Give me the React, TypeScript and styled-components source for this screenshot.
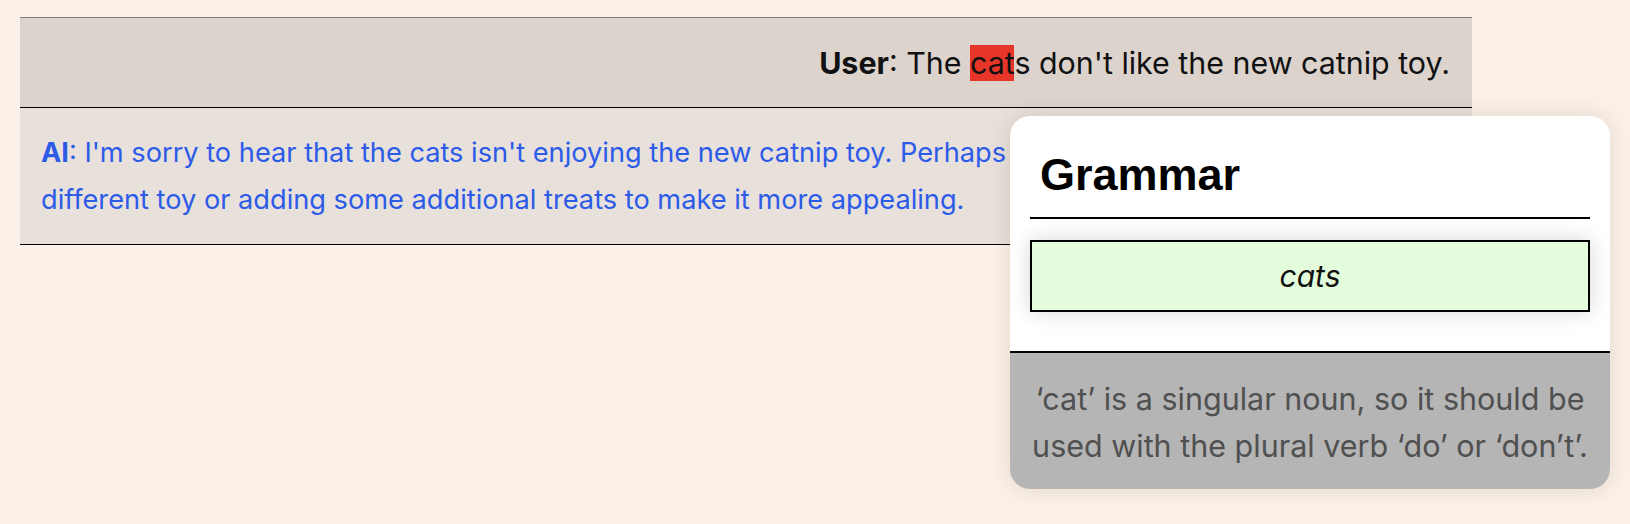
import React from "react";
import styled, { createGlobalStyle } from "styled-components";

const GlobalStyle = createGlobalStyle`
  html, body {
    margin: 0;
    padding: 0;
    background: #fbf1e8;
  }
  body {
    font-family: Inter, "Noto Sans", sans-serif;
  }
`;

const Page = styled.div`
  position: relative;
  width: 1630px;
  height: 524px;
  padding: 17px 0 0 20px;
  box-sizing: border-box;
`;

const Thread = styled.div`
  width: 1452px;
  border-top: 1px solid #7d7d7d;
  display: flex;
  flex-direction: column;
`;

const Message = styled.div<{ $from: "user" | "ai" }>`
  border-bottom: 1px solid #000;
  background: ${(p) => (p.$from === "user" ? "#dcd3cd" : "#e8e0db")};
  text-align: ${(p) => (p.$from === "user" ? "right" : "left")};
  color: ${(p) => (p.$from === "user" ? "#111" : "#2c5be8")};
  font-size: ${(p) => (p.$from === "user" ? "30.4px" : "27.2px")};
  line-height: ${(p) => (p.$from === "user" ? "48px" : "47px")};
  padding: ${(p) => (p.$from === "user" ? "21px 22px 20px 20px" : "21px 20px 21px 21px")};
  white-space: nowrap;
  overflow: hidden;
`;

const Speaker = styled.b`
  font-weight: 700;
`;

const Flag = styled.span`
  background: #e8352a;
`;

const Popover = styled.div`
  position: absolute;
  left: 1010px;
  top: 116px;
  width: 600px;
  height: 373px;
  background: #fff;
  border-radius: 20px;
  overflow: hidden;
  box-shadow: 0 0 22px rgba(90, 60, 40, 0.15);
  display: flex;
  flex-direction: column;
`;

const PopoverBody = styled.div`
  padding: 20px 20px 0;
  display: flex;
  flex-direction: column;
`;

const Title = styled.h2`
  margin: 13px 0 0;
  padding: 0 10px 16px;
  border-bottom: 2px solid #000;
  font-family: "Liberation Sans", Arial, sans-serif;
  font-weight: 700;
  font-size: 45px;
  line-height: 52px;
  color: #000;
`;

const Suggestion = styled.div`
  margin: 21px 0 39px;
  height: 72px;
  box-sizing: border-box;
  border: 2px solid #000;
  background: #e3fcdc;
  box-shadow: 0 0 20px rgba(0, 0, 0, 0.16);
  display: flex;
  align-items: center;
  justify-content: center;
  font-style: italic;
  font-size: 30px;
  color: #111;
`;

const Explanation = styled.div`
  flex: 1;
  border-top: 2px solid #000;
  background: #b5b5b5;
  color: #505050;
  text-align: center;
  font-size: 30.5px;
  line-height: 47px;
  padding: 22px 19px 20px;
`;

export default function App() {
  return (
    <>
      <GlobalStyle />
      <Page>
        <Thread>
          <Message $from="user">
            <Speaker>User</Speaker>: The <Flag>cat</Flag>s don't like the new catnip toy.
          </Message>
          <Message $from="ai">
            <Speaker>AI</Speaker>: I'm sorry to hear that the cats isn't enjoying the new catnip toy. Perhaps you could try a
            <br />
            different toy or adding some additional treats to make it more appealing.
          </Message>
        </Thread>
        <Popover>
          <PopoverBody>
            <Title>Grammar</Title>
            <Suggestion>cats</Suggestion>
          </PopoverBody>
          <Explanation>
            ‘cat’ is a singular noun, so it should be used with the plural verb ‘do’ or ‘don’t’.
          </Explanation>
        </Popover>
      </Page>
    </>
  );
}
